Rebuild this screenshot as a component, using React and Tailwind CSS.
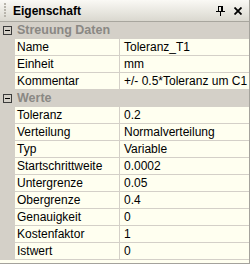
import React from "react";

const groups = [
  {
    title: "Streuung Daten",
    rows: [
      ["Name", "Toleranz_T1"],
      ["Einheit", "mm"],
      ["Kommentar", "+/- 0.5*Toleranz um C1"],
    ],
  },
  {
    title: "Werte",
    rows: [
      ["Toleranz", "0.2"],
      ["Verteilung", "Normalverteilung"],
      ["Typ", "Variable"],
      ["Startschrittweite", "0.0002"],
      ["Untergrenze", "0.05"],
      ["Obergrenze", "0.4"],
      ["Genauigkeit", "0"],
      ["Kostenfaktor", "1"],
      ["Istwert", "0"],
    ],
  },
];

function MinusBox() {
  return (
    <svg width="9" height="9" viewBox="0 0 9 9">
      <rect x="0.5" y="0.5" width="8" height="8" fill="none" stroke="#3c3c3c" />
      <rect x="2" y="4" width="5" height="1" fill="#000" />
    </svg>
  );
}

function Grip() {
  return (
    <svg width="3" height="16" viewBox="0 0 3 16">
      {[0, 3, 6, 9, 12].map((y) => (
        <rect key={y} x="1" y={y} width="2" height="2" fill="#b8b5ac" />
      ))}
    </svg>
  );
}

export default function App() {
  return (
    <div
      className="w-[250px] h-[264px] overflow-hidden flex flex-col bg-[#fffff0] border-r border-b border-[#a4a29c] text-[12px] text-black"
      style={{ fontFamily: '"Liberation Sans", Arial, sans-serif' }}
    >
      {/* Title bar */}
      <div className="h-[22px] shrink-0 flex items-center border-b border-[#a8a69e] bg-gradient-to-b from-[#faf9f5] to-[#dad8cf]">
        <div className="w-[13px] pl-[3px] flex items-center">
          <Grip />
        </div>
        <span className="font-bold text-[12px] flex-1 leading-none">Eigenschaft</span>
        <svg width="9" height="10" viewBox="0 0 9 10" className="mr-[9px]">
          <rect x="2" y="0" width="5" height="1" fill="#000" />
          <rect x="2" y="0" width="1" height="6" fill="#000" />
          <rect x="5" y="0" width="2" height="6" fill="#000" />
          <rect x="0" y="5" width="9" height="1" fill="#000" />
          <rect x="4" y="6" width="1" height="4" fill="#000" />
        </svg>
        <svg width="8" height="8" viewBox="0 0 8 8" className="mr-[7px]">
          <path d="M0.5 0.5 L7.5 7.5 M7.5 0.5 L0.5 7.5" stroke="#000" strokeWidth="1.8" />
        </svg>
      </div>

      {groups.map((g) => (
        <div key={g.title} className="flex flex-col">
          <div className="h-[17px] shrink-0 flex items-center bg-[#d4d0c8] border-b border-[#d4d0c8]">
            <div className="w-[15px] pl-[3px] flex items-center">
              <MinusBox />
            </div>
            <span className="pl-[2px] font-bold text-[12.5px] text-[#8a8884] leading-none">{g.title}</span>
          </div>
          {g.rows.map(([k, v]) => (
            <div key={k} className="h-[17px] shrink-0 flex">
              <div className="w-[15px] shrink-0 bg-[#d4d0c8]" />
              <div className="flex flex-1 border-b border-[#d4d0c8]">
                <div className="w-[105px] shrink-0 pl-[2px] flex items-center border-r border-[#d4d0c8] whitespace-nowrap overflow-hidden">
                  {k}
                </div>
                <div className="flex-1 pl-[4px] flex items-center whitespace-nowrap overflow-hidden">{v}</div>
              </div>
            </div>
          ))}
        </div>
      ))}
    </div>
  );
}
